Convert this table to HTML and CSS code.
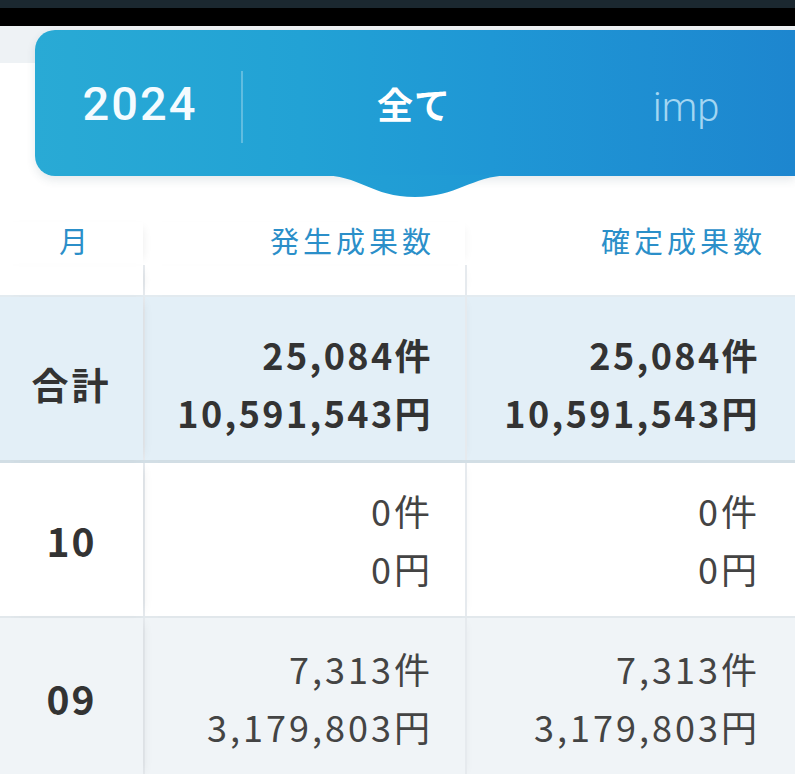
FILE: index.html
```html
<!DOCTYPE html>
<html lang="ja">
<head>
<meta charset="utf-8">
<title>成果一覧</title>
<link rel="stylesheet" href="styles.css">
</head>
<body>
<div class="statusbar"></div>
<div class="notch"></div>
<header class="hero">
  <div class="card">
    <div class="seg seg-year"><span class="year">2024</span></div>
    <div class="seg seg-all"><span class="all">全て</span></div>
    <div class="seg seg-imp"><span class="imp">imp</span></div>
    <svg class="wave" viewBox="0 0 196 22" width="196" height="22" aria-hidden="true">
      <defs>
        <linearGradient id="wg" x1="0" x2="1" y1="0" y2="0">
          <stop offset="0" stop-color="#22a1d5"/>
          <stop offset="1" stop-color="#1f98d5"/>
        </linearGradient>
      </defs>
      <path d="M0 0 C 42 0, 52 22, 96 22 C 140 22, 152 0, 196 0 Z" fill="url(#wg)"/>
    </svg>
  </div>
</header>
<main class="table">
  <div class="row head">
    <div class="cell c1 h">月</div>
    <div class="cell c2 h">発生成果数</div>
    <div class="cell c3 h">確定成果数</div>
  </div>
  <div class="row spacer">
    <div class="cell c1"></div>
    <div class="cell c2"></div>
    <div class="cell c3"></div>
  </div>
  <div class="row total">
    <div class="cell c1 label">合計</div>
    <div class="cell c2 num"><span>25,084件</span><span>10,591,543円</span></div>
    <div class="cell c3 num"><span>25,084件</span><span>10,591,543円</span></div>
  </div>
  <div class="row month white">
    <div class="cell c1 label m">10</div>
    <div class="cell c2 num"><span>0件</span><span>0円</span></div>
    <div class="cell c3 num"><span>0件</span><span>0円</span></div>
  </div>
  <div class="row month grey">
    <div class="cell c1 label m">09</div>
    <div class="cell c2 num"><span>7,313件</span><span>3,179,803円</span></div>
    <div class="cell c3 num"><span>7,313件</span><span>3,179,803円</span></div>
  </div>
</main>
</body>
</html>
```
FILE: styles.css
```css
* { box-sizing: border-box; }
html, body { margin: 0; padding: 0; }
body {
  background: #ffffff;
  font-family: "Noto Sans CJK JP", Roboto, "Noto Sans", sans-serif;
  overflow: hidden;
  width: 795px;
  height: 774px;
}
.statusbar { height: 8px; background: #1b2830; }
.notch { height: 18px; background: #000; }

.hero {
  background: linear-gradient(to bottom, #eef2f5 0, #eef2f5 37px, #ffffff 37px);
  padding: 4px 0 0 35px;
  position: relative;
  z-index: 3;
}
.card {
  position: relative;
  height: 146px;
  border-radius: 20px 0 0 20px;
  background: linear-gradient(to right, #29aad5 0%, #22a2d5 35%, #1f97d5 60%, #1d86cf 100%);
  box-shadow: 0 4px 10px rgba(40, 70, 90, 0.12);
  display: grid;
  grid-template-columns: 208px 342px 1fr;
  align-items: center;
}
.seg { display: flex; justify-content: center; align-items: center; height: 100%; }
.seg-year { position: relative; }
.seg-year::after {
  content: "";
  position: absolute;
  right: 0;
  top: 41px;
  height: 72px;
  width: 2px;
  background: rgba(255, 255, 255, 0.28);
}
.year {
  font-family: Roboto, "Noto Sans", sans-serif;
  font-weight: 500;
  font-size: 47px;
  letter-spacing: 2px;
  color: #f4fbff;
  padding-left: 2px;
}
.all {
  font-weight: 700;
  font-size: 36px;
  color: #fff;
  letter-spacing: 1px;
}
.seg-imp { padding-right: 8px; }
.imp {
  font-family: Roboto, "Noto Sans", sans-serif;
  font-weight: 300;
  font-size: 40px;
  color: #a3d6f2;
  padding-top: 8px;
}
.wave {
  position: absolute;
  left: 284px;
  top: 145px;
  display: block;
}

.table { position: relative; }
.row {
  display: grid;
  grid-template-columns: 143px 322px 1fr;
}
.cell { position: relative; }
.c2, .c3 { border-left: 2px solid #e6eaee; }
.head .cell { border-left: none; }
.head { height: 89px; align-items: end; }
.h {
  font-size: 29px;
  color: #2b8fc9;
  letter-spacing: 4px;
  line-height: 36px;
  padding-bottom: 7px;
}
.head .c1 { text-align: center; padding-left: 8px; }
.head .c2 { text-align: right; padding-right: 30px; }
.head .c3 { text-align: right; padding-right: 29px; }
.spacer { height: 32px; border-bottom: 2px solid #e3ebf0; }

.total { background: #e3eff7; height: 166px; border-bottom: 3px solid #d2dee5; }
.white { background: #ffffff; height: 155px; border-bottom: 2px solid #e2e8ec; }
.grey { background: #f0f4f7; height: 160px; }

.c1 { box-shadow: 6px 0 10px -6px rgba(0, 0, 0, 0.08); z-index: 1; }
.c2 { box-shadow: 6px 0 10px -6px rgba(0, 0, 0, 0.05); }

.label {
  display: flex;
  align-items: center;
  justify-content: center;
  font-weight: 700;
  color: #333;
  font-size: 37px;
  letter-spacing: 3px;
}
.total .label { padding-top: 10px; }
.label.m { font-size: 39px; letter-spacing: 2px; }
.num {
  display: flex;
  flex-direction: column;
  align-items: flex-end;
  justify-content: center;
  line-height: 58px;
  font-size: 36px;
  letter-spacing: 3px;
  color: #444;
}
.c2.num { padding-right: 32px; }
.c3.num { padding-right: 35px; }
.total .num { font-weight: 700; color: #333; padding-top: 8px; font-size: 36px; letter-spacing: 2.4px; }
.month .num { padding-bottom: 2px; }
```
